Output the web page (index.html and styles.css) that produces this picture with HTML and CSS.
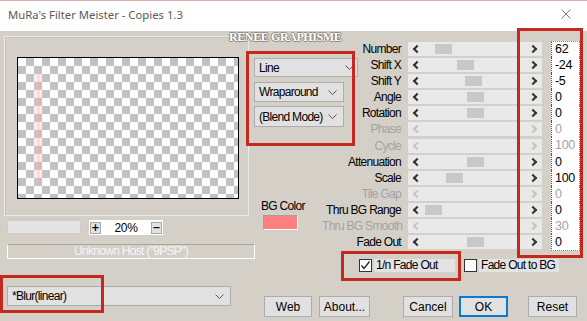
FILE: index.html
```html
<!DOCTYPE html>
<html lang="en">
<head>
    <meta charset="UTF-8">
    <title>MuRa's Filter Meister - Copies 1.3</title>
    <link rel="stylesheet" href="styles.css">
</head>
<body>
    <div class="window">
        <div class="titlebar">
            <span class="title">MuRa's Filter Meister - Copies 1.3</span>
            <svg class="close" width="10" height="10" viewBox="0 0 10 10"><path d="M0.5 0.5L9.5 9.5M9.5 0.5L0.5 9.5" stroke="#7a7a7a" stroke-width="1"/></svg>
        </div>

        <div class="client">
            <div class="left">
                <div class="frame">
                    <div class="preview"><div class="stripe"></div></div>
                </div>
                <div class="zoom-row">
                    <div class="scroll-empty"></div>
                    <div class="zoom-box">
                        <span class="zbtn">+</span>
                        <span class="zval">20%</span>
                        <span class="zbtn">&minus;</span>
                    </div>
                </div>
                <div class="host">Unknown Host ("9PSP")</div>
                <div class="select select-preset">
                    <span>*Blur(linear)</span>
                    <svg class="chev" width="9" height="5" viewBox="0 0 9 5"><polyline points="0.5,0.5 4.5,4.5 8.5,0.5" fill="none" stroke="#555"/></svg>
                </div>
            </div>

            <div class="right">
                <div class="controls">
                    <div class="mid">
                        <div class="select select-line">
                            <span>Line</span>
                            <svg class="chev" width="9" height="5" viewBox="0 0 9 5"><polyline points="0.5,0.5 4.5,4.5 8.5,0.5" fill="none" stroke="#555"/></svg>
                        </div>
                        <div class="select select-mode">
                            <span>Wraparound</span>
                            <svg class="chev" width="9" height="5" viewBox="0 0 9 5"><polyline points="0.5,0.5 4.5,4.5 8.5,0.5" fill="none" stroke="#555"/></svg>
                        </div>
                        <div class="select select-blend">
                            <span>(Blend Mode)</span>
                            <svg class="chev" width="9" height="5" viewBox="0 0 9 5"><polyline points="0.5,0.5 4.5,4.5 8.5,0.5" fill="none" stroke="#555"/></svg>
                        </div>
                        <div class="bg-label">BG Color</div>
                        <div class="swatch"></div>
                    </div>

                    <div class="sliders">
                        <div class="row"><span class="label">Number</span><div class="track"><i class="arr l"></i><b class="thumb" style="left:27px"></b><i class="arr r"></i></div><span class="val">62</span></div>
                        <div class="row"><span class="label">Shift X</span><div class="track"><i class="arr l"></i><b class="thumb" style="left:49px"></b><i class="arr r"></i></div><span class="val">-24</span></div>
                        <div class="row"><span class="label">Shift Y</span><div class="track"><i class="arr l"></i><b class="thumb" style="left:57px"></b><i class="arr r"></i></div><span class="val">-5</span></div>
                        <div class="row"><span class="label">Angle</span><div class="track"><i class="arr l"></i><b class="thumb" style="left:59px"></b><i class="arr r"></i></div><span class="val">0</span></div>
                        <div class="row"><span class="label">Rotation</span><div class="track"><i class="arr l"></i><b class="thumb" style="left:59px"></b><i class="arr r"></i></div><span class="val">0</span></div>
                        <div class="row off"><span class="label">Phase</span><div class="track"><i class="arr l"></i><i class="arr r"></i></div><span class="val">0</span></div>
                        <div class="row off"><span class="label">Cycle</span><div class="track"><i class="arr l"></i><i class="arr r"></i></div><span class="val">100</span></div>
                        <div class="row"><span class="label">Attenuation</span><div class="track"><i class="arr l"></i><b class="thumb" style="left:59px"></b><i class="arr r"></i></div><span class="val">0</span></div>
                        <div class="row"><span class="label">Scale</span><div class="track"><i class="arr l"></i><b class="thumb" style="left:38px"></b><i class="arr r"></i></div><span class="val">100</span></div>
                        <div class="row off"><span class="label">Tile Gap</span><div class="track"><i class="arr l"></i><i class="arr r"></i></div><span class="val">0</span></div>
                        <div class="row"><span class="label">Thru BG Range</span><div class="track"><i class="arr l"></i><b class="thumb" style="left:17px"></b><i class="arr r"></i></div><span class="val">0</span></div>
                        <div class="row off"><span class="label">Thru BG Smooth</span><div class="track"><i class="arr l"></i><i class="arr r"></i></div><span class="val">30</span></div>
                        <div class="row"><span class="label">Fade Out</span><div class="track"><i class="arr l"></i><b class="thumb" style="left:59px"></b><i class="arr r"></i></div><span class="val">0</span></div>
                    </div>
                </div>

                <div class="checks">
                    <label class="check">
                        <span class="box"><svg width="11" height="11" viewBox="0 0 11 11"><polyline points="1.5,5.5 4,8.5 9.5,1.5" fill="none" stroke="#222" stroke-width="1.3"/></svg></span>
                        <span class="text">1/n Fade Out</span>
                    </label>
                    <label class="check">
                        <span class="box"></span>
                        <span class="text">Fade Out to BG</span>
                    </label>
                </div>

                <div class="buttons">
                    <button class="btn btn-web">Web</button>
                    <button class="btn btn-about">About...</button>
                    <button class="btn btn-cancel">Cancel</button>
                    <button class="btn btn-ok">OK</button>
                    <button class="btn btn-reset">Reset</button>
                </div>
            </div>
        </div>

        <!-- watermark and red annotation boxes laid over the dialog -->
        <div class="watermark">RENEE GRAPHISME</div>
        <div class="mark mark-modes"></div>
        <div class="mark mark-values"></div>
        <div class="mark mark-fade"></div>
        <div class="mark mark-preset"></div>
    </div>
</body>
</html>
```

FILE: styles.css
```css
body {
    margin: 0;
    background: #d4d0c8;
    font-family: "Liberation Sans", Arial, sans-serif;
    font-size: 12px;
    letter-spacing: -0.7px;
    color: #000;
}
.window {
    position: relative;
    width: 587px;
    height: 321px;
    overflow: hidden;
    background: #d4d0c8;
}
.titlebar {
    height: 30px;
    background: #fff;
    border-top: 1px solid #dba8b0;
    display: flex;
    align-items: center;
    justify-content: space-between;
    padding: 0 16px 0 8px;
}
.title {
    font-family: "Noto Sans", "Open Sans", sans-serif;
    font-size: 11.3px;
    letter-spacing: 0;
    color: #5a5a5a;
    margin-top: -4px;
}
.close {
    margin-top: -4px;
}
.client {
    display: flex;
    height: 290px;
}

/* left column: preview */
.left {
    width: 250px;
    flex: none;
    display: flex;
    flex-direction: column;
}
.frame {
    box-sizing: border-box;
    width: 245px;
    height: 180px;
    margin: 5px 0 0 4px;
    padding: 20px 0 0 12px;
    border: 1px solid #eceae6;
    box-shadow: inset 1px 1px 0 #c6c2ba;
}
.preview {
    position: relative;
    box-sizing: border-box;
    width: 222px;
    height: 142px;
    border: 1px solid #000;
    background: repeating-conic-gradient(#c2c2c2 0 25%, #fff 0 50%) 0 0 / 16px 16px;
}
.stripe {
    position: absolute;
    left: 16px;
    top: 15px;
    width: 9px;
    height: 110px;
    background: linear-gradient(90deg, rgba(255,200,200,0.15), rgba(250,170,170,0.45), rgba(255,200,200,0.1));
}
.zoom-row {
    display: flex;
    gap: 8px;
    margin: 4px 0 0 7px;
}
.scroll-empty {
    box-sizing: border-box;
    width: 74px;
    height: 14px;
    background: #e4e4e4;
    border: 1px solid #cdcdcd;
}
.zoom-box {
    box-sizing: border-box;
    width: 74px;
    height: 15px;
    background: #fff;
    display: flex;
    align-items: center;
    justify-content: space-between;
    padding: 0 1px;
}
.zbtn {
    box-sizing: border-box;
    width: 11px;
    height: 12px;
    background: #e2e2e2;
    border: 1px solid #a8a8a8;
    font-family: "DejaVu Sans", sans-serif;
    font-weight: bold;
    font-size: 10px;
    letter-spacing: 0;
    line-height: 10px;
    text-align: center;
}
.zval {
    line-height: 14px;
    letter-spacing: -0.3px;
}
.host {
    box-sizing: border-box;
    width: 248px;
    height: 15px;
    margin: 9px 0 0 7px;
    border: 1px solid #fff;
    border-top-color: #a9a59d;
    color: #f6f6f6;
    text-align: center;
    line-height: 13px;
}
.select {
    box-sizing: border-box;
    display: flex;
    align-items: center;
    justify-content: space-between;
    background: #e1e1e1;
    border: 1px solid #adadad;
    padding: 0 6px 0 4px;
    flex: none;
    white-space: nowrap;
}
.select-preset {
    width: 224px;
    height: 20px;
    margin: 27px 0 0 7px;
}

/* middle column */
.right {
    flex: 1;
    display: flex;
    flex-direction: column;
}
.controls {
    display: flex;
}
.mid {
    width: 68px;
    flex: none;
    padding-left: 4px;
    display: flex;
    flex-direction: column;
}
.select-line {
    width: 104px;
    height: 19px;
    margin-top: 27px;
    padding-right: 3px;
}
.select-mode {
    width: 90px;
    height: 20px;
    margin-top: 5px;
}
.select-blend {
    width: 90px;
    height: 21px;
    margin-top: 4px;
}
.bg-label {
    margin: 72px 0 0 7px;
    white-space: nowrap;
    line-height: 14px;
}
.swatch {
    box-sizing: border-box;
    width: 35px;
    height: 15px;
    margin: 2px 0 0 9px;
    background: #fd8080;
    border: 1px solid #fff;
    border-top-color: #a0a0a0;
    border-left-color: #a0a0a0;
}

/* sliders */
.sliders {
    margin-top: 9.5px;
}
.row {
    display: flex;
    align-items: center;
    height: 16.17px;
}
.label {
    width: 79px;
    text-align: right;
    white-space: nowrap;
}
.track {
    position: relative;
    width: 134px;
    height: 14px;
    margin-left: 7px;
    background: #e9e9e9;
}
.thumb {
    position: absolute;
    top: 2px;
    width: 17px;
    height: 10px;
    background: #c8c8c8;
}
.arr {
    position: absolute;
    top: 4px;
    width: 4px;
    height: 4px;
    border-left: 2px solid #333;
    border-bottom: 2px solid #333;
}
.arr.l {
    left: 6px;
    transform: rotate(45deg);
}
.arr.r {
    right: 6px;
    transform: rotate(-135deg);
}
.val {
    box-sizing: border-box;
    width: 29px;
    height: 100%;
    margin-left: 9px;
    padding-left: 3px;
    background: #fff;
    border-left: 1px dotted #555;
    border-right: 1px dotted #888;
    line-height: 16px;
    font-size: 12.5px;
    letter-spacing: -0.3px;
}
.row:first-child .val {
    border-top: 1px dotted #888;
    line-height: 15px;
}
.row:last-child .val {
    border-bottom: 1px dotted #888;
}
.off .label,
.off .val {
    color: #a3a3a3;
}
.off .arr {
    border-color: #c4c4c4;
}

/* checkboxes */
.checks {
    display: flex;
    align-items: center;
    height: 22px;
    margin-top: 4px;
    padding-left: 109px;
    gap: 9px;
}
.check {
    display: flex;
    align-items: center;
    gap: 2px;
}
.box {
    box-sizing: border-box;
    width: 13px;
    height: 13px;
    background: #fff;
    border: 1px solid #333;
    display: flex;
    align-items: center;
    justify-content: center;
}
.check .text {
    background: #e3e3e3;
    padding: 0 4px 0 2px;
    line-height: 13px;
    height: 13px;
}
.check:first-child .text {
    width: 81px;
    box-sizing: border-box;
}

/* buttons */
.buttons {
    display: flex;
    margin-top: 19.5px;
    padding-left: 14px;
}
.btn {
    box-sizing: border-box;
    height: 21px;
    background: #e1e1e1;
    border: 1px solid #adadad;
    font: inherit;
    padding: 0;
}
.btn-web { width: 48px; }
.btn-about { width: 51px; margin-left: 7px; }
.btn-cancel { width: 50px; margin-left: 33px; }
.btn-ok { width: 49px; margin-left: 6px; border: 2px solid #0a78d4; }
.btn-reset { width: 49px; margin-left: 20px; }

/* overlays */
.watermark {
    position: absolute;
    left: 229px;
    top: 30px;
    font-family: "Liberation Serif", serif;
    font-weight: bold;
    font-size: 12px;
    letter-spacing: -0.4px;
    color: #fff;
    text-shadow: 1px 0 #8a8680, -1px 0 #8a8680, 0 1px #8a8680, 0 -1px #8a8680;
}
.mark {
    position: absolute;
    box-sizing: border-box;
    border: 3px solid #c4281e;
}
.mark-modes { left: 246px; top: 51px; width: 109px; height: 95px; }
.mark-values { left: 517px; top: 28px; width: 66px; height: 230px; }
.mark-fade { left: 341px; top: 251px; width: 120px; height: 30px; }
.mark-preset { left: 0; top: 275px; width: 104px; height: 38px; }
```
